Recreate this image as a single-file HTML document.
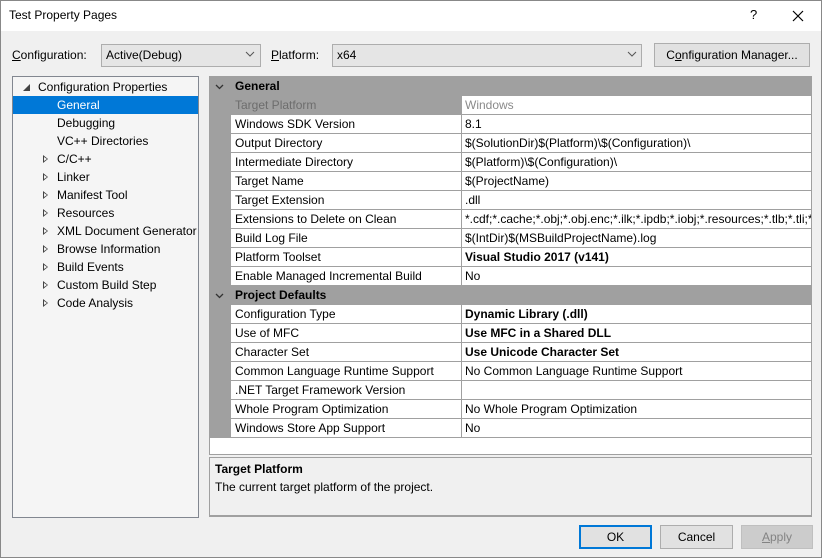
<!DOCTYPE html>
<html><head><style>
*{box-sizing:border-box;margin:0;padding:0}
body{width:822px;height:558px;overflow:hidden;background:#f0f0f0;font-family:"Liberation Sans",sans-serif;font-size:12px;color:#000;position:relative}
.win{position:absolute;left:0;top:0;width:822px;height:558px;border:1px solid #888}
.title{position:absolute;left:1px;top:1px;width:820px;height:30px;background:#fff}
.abs{position:absolute;white-space:nowrap}
.combo{position:absolute;height:23px;background:#e5e5e5;border:1px solid #adadad;padding:3px 4px;line-height:15px}
.btn{position:absolute;height:24px;background:#e1e1e1;border:1px solid #adadad;text-align:center;line-height:22px}
.tree{position:absolute;left:12px;top:76px;width:187px;height:442px;border:1px solid #828790;background:#f5f5f5}
.ti{position:absolute;left:0;width:185px;height:18px;line-height:18px;white-space:nowrap}
.tri{position:absolute;left:30px;top:5px;width:0;height:0;border-left:5px solid #444;border-top:4px solid transparent;border-bottom:4px solid transparent}
.tri:after{content:"";position:absolute;left:-4px;top:-2px;border-left:3px solid #f5f5f5;border-top:2px solid transparent;border-bottom:2px solid transparent}
.grid{position:absolute;left:209px;top:76px;width:603px;height:379px;border:1px solid #a0a0a0;background:#fff}
.hdr{position:absolute;left:0;width:601px;height:19px;background:#a0a0a0;font-weight:bold;line-height:19px}
.row{position:absolute;left:0;width:601px;height:19px}
.g{position:absolute;left:0;top:0;width:21px;height:19px;background:#a0a0a0}
.n{position:absolute;left:21px;top:0;width:231px;height:19px;border-bottom:1px solid #a0a0a0;border-right:1px solid #a0a0a0;padding-left:4px;line-height:18px;background:#fff;white-space:nowrap;overflow:hidden}
.v{position:absolute;left:252px;top:0;width:349px;height:19px;border-bottom:1px solid #a0a0a0;padding-left:3px;line-height:18px;background:#fff;white-space:nowrap;overflow:hidden}
.desc{position:absolute;left:209px;top:457px;width:603px;height:60px;border:1px solid #a0a0a0;background:#f0f0f0;border-bottom:2px solid #a0a0a0}
</style></head><body>
<div class="win"></div>
<div class="title"></div>
<div class="abs" style="left:9px;top:8px;font-size:12px">Test Property Pages</div>
<div class="abs" style="left:750px;top:7px;font-size:13px">?</div>
<svg class="abs" style="left:792px;top:10px" width="12" height="12"><path d="M1 1L11 11M11 1L1 11" stroke="#000" stroke-width="1.2"/></svg>

<div class="abs" style="left:12px;top:48px"><u>C</u>onfiguration:</div>
<div class="combo" style="left:101px;top:44px;width:160px">Active(Debug)</div>
<svg class="abs" style="left:245px;top:51px" width="10" height="6"><path d="M1 1L5 5L9 1" fill="none" stroke="#555"/></svg>
<div class="abs" style="left:271px;top:48px"><u>P</u>latform:</div>
<div class="combo" style="left:332px;top:44px;width:310px">x64</div>
<svg class="abs" style="left:627px;top:51px" width="10" height="6"><path d="M1 1L5 5L9 1" fill="none" stroke="#555"/></svg>
<div class="btn" style="left:654px;top:43px;width:156px">C<u>o</u>nfiguration Manager...</div>

<div class="tree">
<div class="ti" style="top:1px;padding-left:25px"><svg style="position:absolute;left:10px;top:6px" width="7" height="7"><path d="M7 0L7 7L0 7Z" fill="#444"/></svg>Configuration Properties</div>
<div class="ti" style="top:19px;padding-left:44px;background:#0078d7;color:#fff">General</div>
<div class="ti" style="top:37px;padding-left:44px">Debugging</div>
<div class="ti" style="top:55px;padding-left:44px">VC++ Directories</div>
<div class="ti" style="top:73px;padding-left:44px"><span class="tri"></span>C/C++</div>
<div class="ti" style="top:91px;padding-left:44px"><span class="tri"></span>Linker</div>
<div class="ti" style="top:109px;padding-left:44px"><span class="tri"></span>Manifest Tool</div>
<div class="ti" style="top:127px;padding-left:44px"><span class="tri"></span>Resources</div>
<div class="ti" style="top:145px;padding-left:44px"><span class="tri"></span>XML Document Generator</div>
<div class="ti" style="top:163px;padding-left:44px"><span class="tri"></span>Browse Information</div>
<div class="ti" style="top:181px;padding-left:44px"><span class="tri"></span>Build Events</div>
<div class="ti" style="top:199px;padding-left:44px"><span class="tri"></span>Custom Build Step</div>
<div class="ti" style="top:217px;padding-left:44px"><span class="tri"></span>Code Analysis</div>
</div>

<div class="grid">
<div class="hdr" style="top:0;padding-left:25px"><svg style="position:absolute;left:5px;top:7px" width="9" height="6"><path d="M1 1L4.5 4.5L8 1" fill="none" stroke="#333" stroke-width="1.3"/></svg>General</div>
<div class="row" style="top:19px"><div class="g"></div><div class="n" style="background:#a0a0a0;color:#6d6d6d">Target Platform</div><div class="v" style="color:#8a8a8a">Windows</div></div>
<div class="row" style="top:38px"><div class="g"></div><div class="n">Windows SDK Version</div><div class="v">8.1</div></div>
<div class="row" style="top:57px"><div class="g"></div><div class="n">Output Directory</div><div class="v">$(SolutionDir)$(Platform)\$(Configuration)\</div></div>
<div class="row" style="top:76px"><div class="g"></div><div class="n">Intermediate Directory</div><div class="v">$(Platform)\$(Configuration)\</div></div>
<div class="row" style="top:95px"><div class="g"></div><div class="n">Target Name</div><div class="v">$(ProjectName)</div></div>
<div class="row" style="top:114px"><div class="g"></div><div class="n">Target Extension</div><div class="v">.dll</div></div>
<div class="row" style="top:133px"><div class="g"></div><div class="n">Extensions to Delete on Clean</div><div class="v">*.cdf;*.cache;*.obj;*.obj.enc;*.ilk;*.ipdb;*.iobj;*.resources;*.tlb;*.tli;*.tlh</div></div>
<div class="row" style="top:152px"><div class="g"></div><div class="n">Build Log File</div><div class="v">$(IntDir)$(MSBuildProjectName).log</div></div>
<div class="row" style="top:171px"><div class="g"></div><div class="n">Platform Toolset</div><div class="v"><b>Visual Studio 2017 (v141)</b></div></div>
<div class="row" style="top:190px"><div class="g"></div><div class="n">Enable Managed Incremental Build</div><div class="v">No</div></div>
<div class="hdr" style="top:209px;padding-left:25px"><svg style="position:absolute;left:5px;top:7px" width="9" height="6"><path d="M1 1L4.5 4.5L8 1" fill="none" stroke="#333" stroke-width="1.3"/></svg>Project Defaults</div>
<div class="row" style="top:228px"><div class="g"></div><div class="n">Configuration Type</div><div class="v"><b>Dynamic Library (.dll)</b></div></div>
<div class="row" style="top:247px"><div class="g"></div><div class="n">Use of MFC</div><div class="v"><b>Use MFC in a Shared DLL</b></div></div>
<div class="row" style="top:266px"><div class="g"></div><div class="n">Character Set</div><div class="v"><b>Use Unicode Character Set</b></div></div>
<div class="row" style="top:285px"><div class="g"></div><div class="n">Common Language Runtime Support</div><div class="v">No Common Language Runtime Support</div></div>
<div class="row" style="top:304px"><div class="g"></div><div class="n">.NET Target Framework Version</div><div class="v"></div></div>
<div class="row" style="top:323px"><div class="g"></div><div class="n">Whole Program Optimization</div><div class="v">No Whole Program Optimization</div></div>
<div class="row" style="top:342px"><div class="g"></div><div class="n">Windows Store App Support</div><div class="v">No</div></div>
</div>

<div class="desc">
<div class="abs" style="left:5px;top:4px;font-weight:bold">Target Platform</div>
<div class="abs" style="left:5px;top:22px">The current target platform of the project.</div>
</div>

<div class="btn" style="left:579px;top:525px;width:73px;border:2px solid #0078d7;line-height:20px">OK</div>
<div class="btn" style="left:660px;top:525px;width:73px">Cancel</div>
<div class="btn" style="left:741px;top:525px;width:72px;background:#ccc;border-color:#bfbfbf;color:#838383"><u>A</u>pply</div>
</body></html>
